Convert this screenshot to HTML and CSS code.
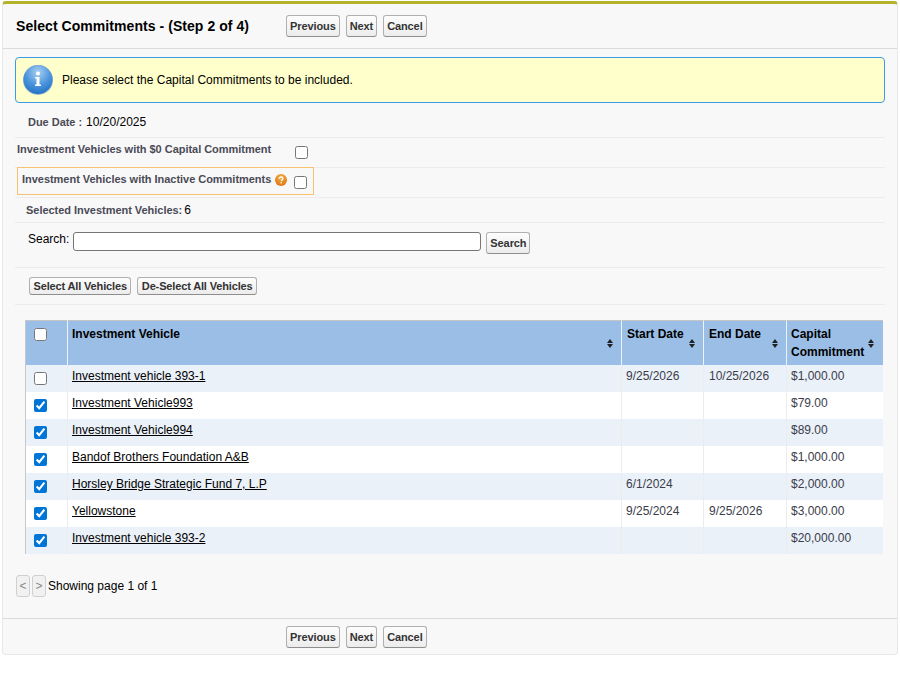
FILE: index.html
```html
<!DOCTYPE html>
<html lang="en">
<head>
<meta charset="utf-8">
<title>Select Commitments</title>
<link rel="stylesheet" href="styles.css">
</head>
<body>
<div class="card">
  <div class="head">
    <h2 class="title">Select Commitments - (Step 2 of 4)</h2>
    <div class="btns">
      <button class="btn">Previous</button><button class="btn">Next</button><button class="btn">Cancel</button>
    </div>
  </div>
  <div class="body">
    <div class="msg">
      <svg class="info" width="32" height="32" viewBox="0 0 32 32">
        <defs>
          <radialGradient id="ib" cx="50%" cy="25%" r="80%">
            <stop offset="0" stop-color="#a9d0f2"/>
            <stop offset="0.55" stop-color="#4c94dc"/>
            <stop offset="1" stop-color="#1f6fc4"/>
          </radialGradient>
        </defs>
        <circle cx="16" cy="16" r="15" fill="#9fb6cc"/>
        <circle cx="16" cy="15.500" r="14.500" fill="url(#ib)"/>
        <circle cx="16" cy="9.500" r="2" fill="#fff"/>
        <path d="M13 13h4.500v7.500h1.500v1.500h-6v-1.500h1.500v-6h-1.500z" fill="#fff"/>
      </svg>
      <span>Please select the Capital Commitments to be included.</span>
    </div>

    <div class="row row-due"><span class="lab">Due Date :</span><span class="val">10/20/2025</span></div>
    <div class="row row-zero">
      <span class="lab lab-zero">Investment Vehicles with $0 Capital Commitment</span>
      <input class="cb cb-zero" type="checkbox">
    </div>
    <div class="row row-inactive">
      <div class="hl">
        <span class="lab">Investment Vehicles with Inactive Commitments</span>
        <svg class="help" width="12" height="12" viewBox="0 0 12 12">
          <defs>
            <radialGradient id="hb" cx="50%" cy="30%" r="75%">
              <stop offset="0" stop-color="#f6b04a"/>
              <stop offset="1" stop-color="#d9720f"/>
            </radialGradient>
          </defs>
          <circle cx="6" cy="6" r="6" fill="url(#hb)"/>
          <path d="M4.200 4.700c0-1.100.8-1.700 1.900-1.700s1.800.6 1.800 1.500c0 1.300-1.500 1.300-1.500 2.500" fill="none" stroke="#fff" stroke-width="1.300"/>
          <rect x="5.600" y="8" width="1.300" height="1.400" fill="#fff"/>
        </svg>
        <input class="cb" type="checkbox">
      </div>
    </div>
    <div class="row row-sel"><span class="lab">Selected Investment Vehicles:</span><span class="val">6</span></div>
    <div class="row row-search">
      <label class="search-lab" for="q">Search:</label>
      <input id="q" class="search" type="text">
      <button class="btn">Search</button>
    </div>
    <div class="row row-all">
      <button class="btn">Select All Vehicles</button><button class="btn">De-Select All Vehicles</button>
    </div>

    <table class="grid">
      <colgroup>
        <col class="c0"><col class="c1"><col class="c2"><col class="c3"><col class="c4">
      </colgroup>
      <thead>
        <tr>
          <th class="chk"><input class="cb" type="checkbox"></th>
          <th><div class="th-in"><span>Investment Vehicle</span><i class="sort"></i></div></th>
          <th><div class="th-in"><span>Start Date</span><i class="sort"></i></div></th>
          <th><div class="th-in"><span>End Date</span><i class="sort"></i></div></th>
          <th><div class="th-in"><span>Capital Commitment</span><i class="sort"></i></div></th>
        </tr>
      </thead>
      <tbody>
        <tr><td class="chk"><input class="cb" type="checkbox"></td><td><a href="#">Investment vehicle 393-1</a></td><td>9/25/2026</td><td>10/25/2026</td><td>$1,000.00</td></tr>
        <tr><td class="chk"><input class="cb" type="checkbox" checked></td><td><a href="#">Investment Vehicle993</a></td><td></td><td></td><td>$79.00</td></tr>
        <tr><td class="chk"><input class="cb" type="checkbox" checked></td><td><a href="#">Investment Vehicle994</a></td><td></td><td></td><td>$89.00</td></tr>
        <tr><td class="chk"><input class="cb" type="checkbox" checked></td><td><a href="#">Bandof Brothers Foundation A&amp;B</a></td><td></td><td></td><td>$1,000.00</td></tr>
        <tr><td class="chk"><input class="cb" type="checkbox" checked></td><td><a href="#">Horsley Bridge Strategic Fund 7, L.P</a></td><td>6/1/2024</td><td></td><td>$2,000.00</td></tr>
        <tr><td class="chk"><input class="cb" type="checkbox" checked></td><td><a href="#">Yellowstone</a></td><td>9/25/2024</td><td>9/25/2026</td><td>$3,000.00</td></tr>
        <tr><td class="chk"><input class="cb" type="checkbox" checked></td><td><a href="#">Investment vehicle 393-2</a></td><td></td><td></td><td>$20,000.00</td></tr>
      </tbody>
    </table>

    <div class="pager">
      <button class="pg">&lt;</button><button class="pg">&gt;</button><span>Showing page 1 of 1</span>
    </div>
  </div>
  <div class="foot">
    <div class="btns">
      <button class="btn">Previous</button><button class="btn">Next</button><button class="btn">Cancel</button>
    </div>
  </div>
</div>
</body>
</html>
```

FILE: styles.css
```css
* { box-sizing: border-box; }
html, body { margin: 0; padding: 0; background: #fff; }
body {
  font-family: "Liberation Sans", Arial, sans-serif;
  font-size: 12px;
  color: #000;
  padding: 1px 2px 0;
}
.card {
  width: 896px;
  height: 654px;
  background: #f8f8f8;
  border: 1px solid #e8e8e8;
  border-top: 3px solid #b5b22b;
  border-radius: 4px;
  display: flex;
  flex-direction: column;
}
.head {
  height: 45px;
  flex: none;
  display: flex;
  align-items: center;
  border-bottom: 1px solid #dbdbdb;
}
.title {
  margin: 0 0 0 13px;
  width: 270px;
  font-size: 14px;
  font-weight: bold;
  letter-spacing: 0.06px;
}
.btns { display: flex; gap: 6px; }
.btn {
  height: 22px;
  padding: 0 3px;
  font: bold 11px "Liberation Sans", Arial, sans-serif;
  letter-spacing: -0.1px;
  color: #333;
  background: linear-gradient(#fdfdfd, #ececec);
  border: 1px solid #b0b0b0;
  border-bottom-color: #8e8e8e;
  border-radius: 3px;
}
.body {
  flex: 1;
  padding: 8px 12px 0;
  display: flex;
  flex-direction: column;
}
.msg {
  height: 46px;
  background: #ffffcc;
  border: 1px solid #3b9af0;
  border-radius: 4px;
  display: flex;
  align-items: center;
  padding-left: 6px;
  gap: 8px;
  flex: none;
}
.row {
  border-bottom: 1px solid #ececec;
  display: flex;
  flex: none;
}
.lab { font-weight: bold; font-size: 11px; color: #4a4a56; letter-spacing: -0.03px; }
.val { font-size: 12px; }
.row-due { height: 35px; align-items: center; padding: 3px 0 0 13px; gap: 4px; }
.row-zero { height: 30px; padding-left: 2px; }
.lab-zero { padding-top: 5px; }
.cb {
  width: 13px;
  height: 13px;
  margin: 0;
  accent-color: #0075d8;
}
.cb-zero { margin: 8px 0 0 24px; }
.row-inactive { height: 30px; padding-left: 2px; }
.hl {
  height: 28px;
  width: 297px;
  margin-top: -1px;
  border: 1px solid #f8c171;
  display: flex;
  align-items: flex-start;
  padding-left: 4px;
}
.hl .lab { margin-top: 5px; }
.help { margin: 6px 0 0 4px; }
.hl .cb { margin: 8px 0 0 7px; }
.row-sel { height: 25px; align-items: center; padding-left: 11px; gap: 2px; }
.row-search { height: 45px; padding: 8px 0 0 13px; align-items: flex-start; }
.search-lab { padding-top: 1px; margin-right: 4px; }
.search {
  width: 408px;
  height: 19px;
  padding: 1px 2px;
  border: 1px solid #767676;
  border-radius: 3px;
  background: #fff;
  margin: 1px 5px 0 0;
}
.row-search .btn { margin-top: 1px; }
.row-all { height: 37px; padding: 9px 0 0 14px; gap: 6px; align-items: flex-start; }
.row-all .btn { height: 18px; padding: 0 3.5px; letter-spacing: -0.15px; }
.grid {
  table-layout: fixed;
  border-collapse: separate;
  border-spacing: 0;
  width: 858px;
  margin: 15px 0 0 10px;
  border-left: 1px solid #c8c8c8;
  flex: none;
}
.c0 { width: 41px; }
.c1 { width: 554px; }
.c2 { width: 82px; }
.c3 { width: 83px; }
.c4 { width: 97px; }
.grid th {
  height: 45px;
  background: #9abee6;
  border-top: 1px solid #c4c4c4;
  border-left: 1px solid #eef3f9;
  padding: 0;
  text-align: left;
  vertical-align: top;
  font-weight: bold;
}
.grid th:first-child, .grid td:first-child { border-left: 0; }
.th-in {
  display: flex;
  justify-content: space-between;
  align-items: flex-start;
  height: 44px;
  padding: 4px 4px 0;
  line-height: 18px;
  position: relative;
}
.grid th:nth-child(3) .th-in, .grid th:nth-child(4) .th-in { padding-left: 5px; }
.sort {
  position: absolute;
  right: 7px;
  top: 18px;
  width: 7px;
  height: 9px;
}
.grid th:nth-child(5) .sort { right: 8px; }
.sort::before, .sort::after {
  content: "";
  position: absolute;
  left: 0;
  border-left: 3.5px solid transparent;
  border-right: 3.5px solid transparent;
}
.sort::before { top: 0; border-bottom: 4px solid #222; }
.sort::after { bottom: 0; border-top: 4px solid #222; }
.grid td {
  height: 27px;
  border-left: 1px solid #ececec;
  padding: 4px 4px 0;
  vertical-align: top;
  color: #3c3c4a;
  line-height: 14px;
}
.grid td:nth-child(4) { padding-left: 5px; }
.grid tbody tr:nth-child(odd) td { background: #eaf1f9; }
.grid tbody tr:nth-child(even) td { background: #fff; }
.grid th.chk { padding: 7px 0 0 8px; line-height: 0; }
.grid td.chk { padding: 7px 0 0 8px; line-height: 0; }
.grid a { color: #000; }
.pager {
  display: flex;
  align-items: center;
  margin: 21px 0 0 1px;
  gap: 2px;
  height: 22px;
}
.pg {
  width: 14px;
  height: 22px;
  padding: 0;
  font: 12px "Liberation Sans", Arial, sans-serif;
  color: #888;
  background: #f1f1f1;
  border: 1px solid #d0d0d0;
  border-radius: 3px;
}
.foot {
  height: 36px;
  flex: none;
  border-top: 1px solid #dbdbdb;
  padding: 7px 0 0 283px;
}
```
